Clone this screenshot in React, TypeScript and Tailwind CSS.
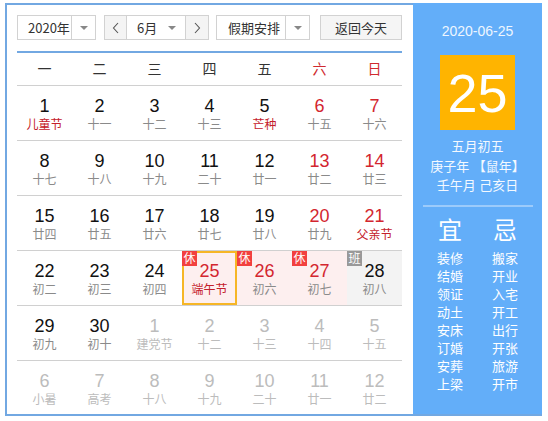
import React from 'react';

type Day = {
  n: number;
  lunar: string;
  red?: boolean;
  lunarRed?: boolean;
  other?: boolean;
  badge?: '休' | '班';
  selected?: boolean;
};

const weeks: Day[][] = [
  [
    { n: 1, lunar: '儿童节', lunarRed: true },
    { n: 2, lunar: '十一' },
    { n: 3, lunar: '十二' },
    { n: 4, lunar: '十三' },
    { n: 5, lunar: '芒种', lunarRed: true },
    { n: 6, lunar: '十五', red: true },
    { n: 7, lunar: '十六', red: true },
  ],
  [
    { n: 8, lunar: '十七' },
    { n: 9, lunar: '十八' },
    { n: 10, lunar: '十九' },
    { n: 11, lunar: '二十' },
    { n: 12, lunar: '廿一' },
    { n: 13, lunar: '廿二', red: true },
    { n: 14, lunar: '廿三', red: true },
  ],
  [
    { n: 15, lunar: '廿四' },
    { n: 16, lunar: '廿五' },
    { n: 17, lunar: '廿六' },
    { n: 18, lunar: '廿七' },
    { n: 19, lunar: '廿八' },
    { n: 20, lunar: '廿九', red: true },
    { n: 21, lunar: '父亲节', red: true, lunarRed: true },
  ],
  [
    { n: 22, lunar: '初二' },
    { n: 23, lunar: '初三' },
    { n: 24, lunar: '初四' },
    { n: 25, lunar: '端午节', red: true, lunarRed: true, badge: '休', selected: true },
    { n: 26, lunar: '初六', red: true, badge: '休' },
    { n: 27, lunar: '初七', red: true, badge: '休' },
    { n: 28, lunar: '初八', badge: '班' },
  ],
  [
    { n: 29, lunar: '初九' },
    { n: 30, lunar: '初十' },
    { n: 1, lunar: '建党节', other: true },
    { n: 2, lunar: '十二', other: true },
    { n: 3, lunar: '十三', other: true },
    { n: 4, lunar: '十四', other: true },
    { n: 5, lunar: '十五', other: true },
  ],
  [
    { n: 6, lunar: '小暑', other: true },
    { n: 7, lunar: '高考', other: true },
    { n: 8, lunar: '十八', other: true },
    { n: 9, lunar: '十九', other: true },
    { n: 10, lunar: '二十', other: true },
    { n: 11, lunar: '廿一', other: true },
    { n: 12, lunar: '廿二', other: true },
  ],
];

const weekdays = ['一', '二', '三', '四', '五', '六', '日'];
const yi = ['装修', '结婚', '领证', '动土', '安床', '订婚', '安葬', '上梁'];
const ji = ['搬家', '开业', '入宅', '开工', '出行', '开张', '旅游', '开市'];

function Caret() {
  return <span className="block w-0 h-0 border-x-[4px] border-x-transparent border-t-[4px] border-t-[#888]" />;
}

function Chevron({ dir }: { dir: 'left' | 'right' }) {
  return (
    <svg width="8" height="12" viewBox="0 0 8 12" fill="none" stroke="#555" strokeWidth="1.1">
      {dir === 'left' ? <path d="M6 1 L1.5 6 L6 11" /> : <path d="M2 1 L6.5 6 L2 11" />}
    </svg>
  );
}

function Cell({ d }: { d: Day }) {
  let bg = '';
  if (d.badge === '休') bg = 'bg-[#fdefef]';
  if (d.badge === '班') bg = 'bg-[#f3f3f3]';
  const numColor = d.other ? 'text-[#bcbcbc]' : d.red ? 'text-[#d3262f]' : 'text-[#111]';
  const lunarColor = d.other ? 'text-[#bcbcbc]' : d.lunarRed ? 'text-[#c4202a]' : 'text-[#8a8a8a]';
  return (
    <div className={`relative flex flex-col items-center pt-[9px] ${bg}`}>
      {d.selected && <div className="absolute inset-0 border-2 border-[#f6b626]" />}
      {d.badge && (
        <span
          className={`absolute top-0 left-0 w-[15px] h-[15px] flex items-center justify-center text-[12px] leading-none text-white ${
            d.badge === '休' ? 'bg-[#f2403f]' : 'bg-[#999]'
          }`}
        >
          {d.badge}
        </span>
      )}
      <span className={`text-[18px] leading-[22px] ${numColor}`}>{d.n}</span>
      <span className={`text-[12px] leading-[16px] ${lunarColor}`}>{d.lunar}</span>
    </div>
  );
}

export default function App() {
  return (
    <div
      className="ml-[5px] mt-[3px] w-[537px] flex border-l-2 border-b-2 border-[#72a8e2] bg-white"
      style={{ fontFamily: '"Liberation Sans", "Noto Sans CJK SC", sans-serif' }}
    >
      <div className="w-[406px] border-t-2 border-[#72a8e2] pt-[10px] pl-[10px] pr-[11px]">
        <div
          className="flex items-center h-[25px] text-[13px] text-[#333] whitespace-nowrap"
          style={{ fontFamily: '"Noto Sans CJK SC", sans-serif' }}
        >
          <div className="flex h-full w-[79px] border border-[#d2d2d2] bg-white">
            <span className="flex-1 flex items-center pl-[10px]">2020年</span>
            <span className="w-[24px] border-l border-[#d2d2d2] flex items-center justify-center">
              <Caret />
            </span>
          </div>
          <div className="flex h-full w-[105px] ml-[8px] border border-[#d2d2d2]">
            <span className="w-[22px] bg-[#f4f4f4] border-r border-[#d2d2d2] flex items-center justify-center">
              <Chevron dir="left" />
            </span>
            <span className="flex-1 flex items-center justify-between pl-[10px] pr-[9px] bg-white">
              6月
              <Caret />
            </span>
            <span className="w-[23px] bg-[#f4f4f4] border-l border-[#d2d2d2] flex items-center justify-center">
              <Chevron dir="right" />
            </span>
          </div>
          <div className="flex h-full w-[94px] ml-[7px] border border-[#d2d2d2] bg-white">
            <span className="flex-1 flex items-center pl-[11px] overflow-hidden">假期安排</span>
            <span className="w-[24px] border-l border-[#d2d2d2] flex items-center justify-center">
              <Caret />
            </span>
          </div>
          <button className="h-full w-[82px] ml-[10px] border border-[#d2d2d2] bg-[#f5f5f5] text-[13px] text-[#333]">
            返回今天
          </button>
        </div>

        <div className="mt-[11px] border-t-2 border-[#72a8e2]" />
        <div className="grid grid-cols-7 h-[33px] items-center border-b border-[#d0d0d0] text-[14px] text-[#333] text-center">
          {weekdays.map((w, i) => (
            <span key={w} className={i >= 5 ? 'text-[#cf2a2f]' : ''}>
              {w}
            </span>
          ))}
        </div>

        {weeks.map((week, wi) => (
          <div
            key={wi}
            className={`grid grid-cols-7 ${wi < 5 ? 'h-[55px] border-b border-[#d0d0d0]' : 'h-[53px]'}`}
          >
            {week.map((d, di) => (
              <Cell key={di} d={d} />
            ))}
          </div>
        ))}
      </div>

      <div className="w-[129px] bg-[#63aef9] text-white flex flex-col items-center">
        <div className="mt-[18px] text-[14px] leading-[20px] text-[#eef6ff]">2020-06-25</div>
        <div className="mt-[14px] w-[75px] h-[75px] bg-[#ffb400] flex items-center justify-center">
          <span className="text-[54px] font-light leading-none">25</span>
        </div>
        <div className="mt-[7px] text-[13px] leading-[19.5px] text-center text-[#f4f9ff]">
          <div>五月初五</div>
          <div>庚子年 【鼠年】</div>
          <div>壬午月 己亥日</div>
        </div>
        <div className="mt-[9px] w-[110px] border-t-2 border-[#9ccbfb]" />
        <div className="mt-[9px] w-[110px] grid grid-cols-2 text-center">
          <span className="text-[24px] leading-[30px]">宜</span>
          <span className="text-[24px] leading-[30px]">忌</span>
          <div className="mt-[4px] text-[13px] leading-[18px]">
            {yi.map((t) => (
              <div key={t}>{t}</div>
            ))}
          </div>
          <div className="mt-[4px] text-[13px] leading-[18px]">
            {ji.map((t) => (
              <div key={t}>{t}</div>
            ))}
          </div>
        </div>
      </div>
    </div>
  );
}
